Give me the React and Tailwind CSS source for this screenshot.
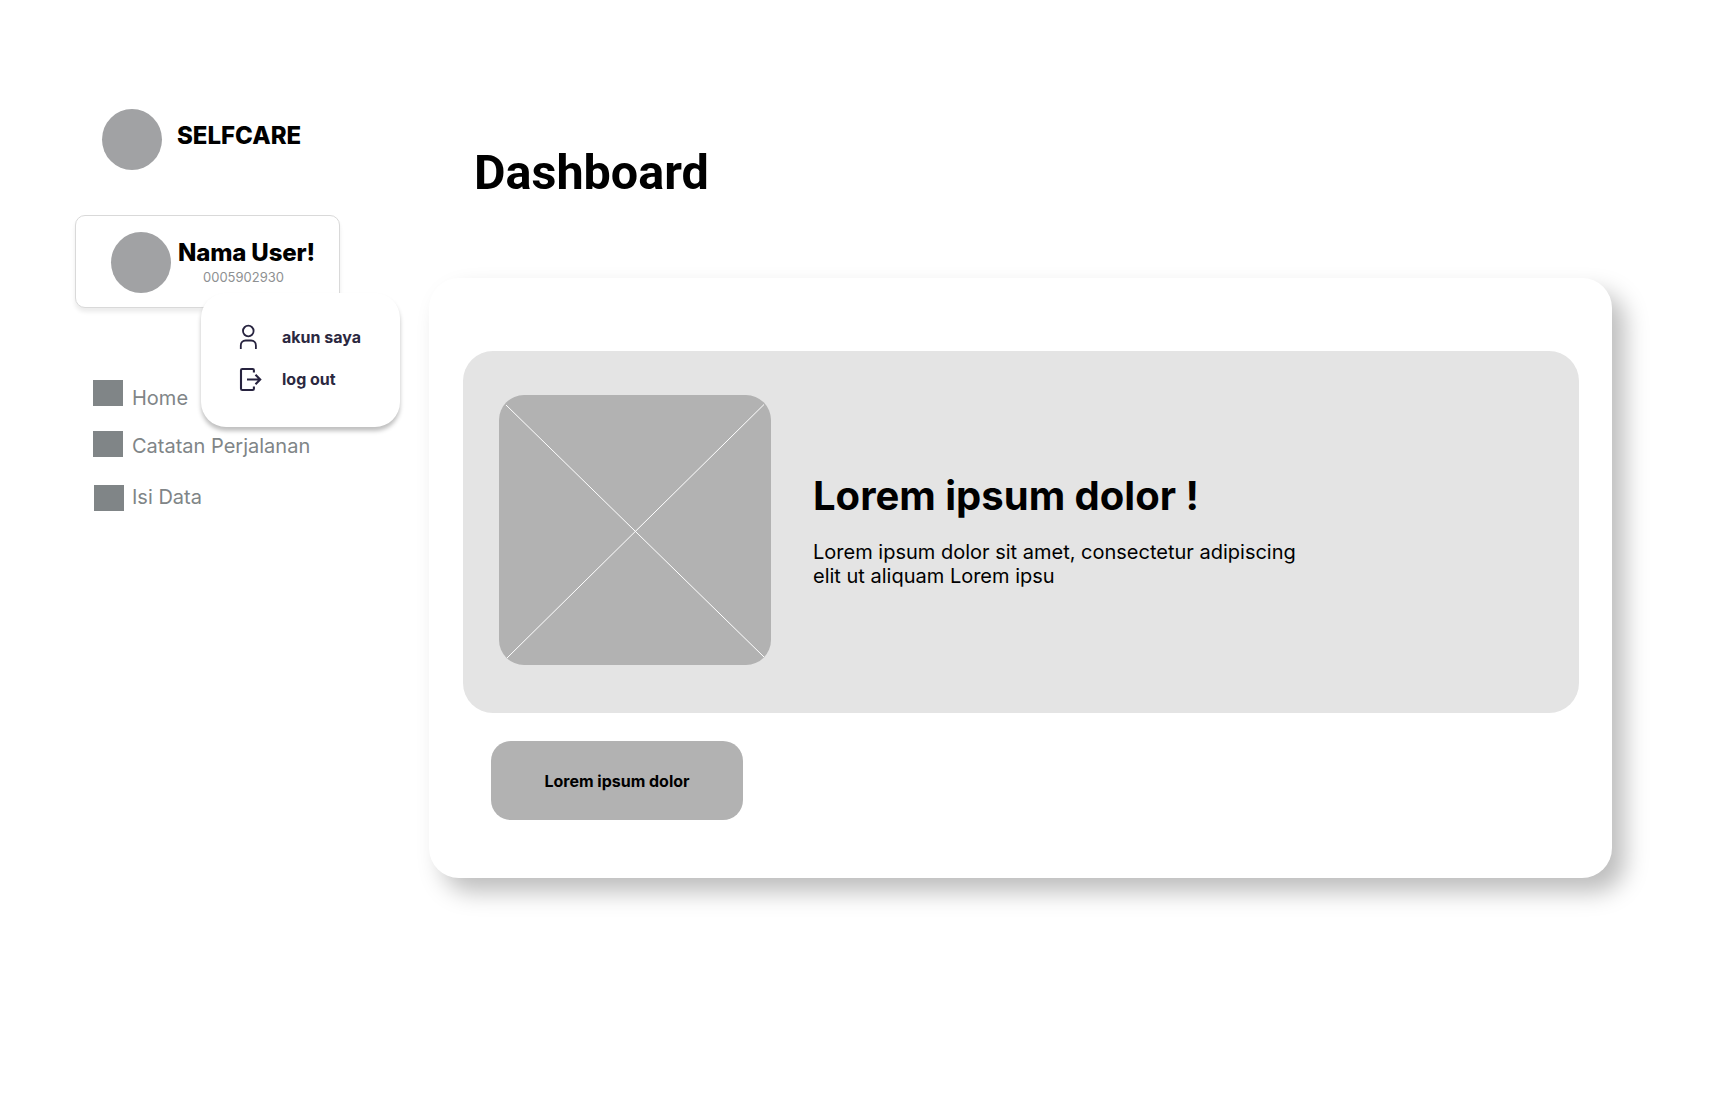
import React from "react";

const navItems = [
  { label: "Home", row: "h-[26px] ml-[93px]", text: "ml-[9px] mt-[6px]" },
  { label: "Catatan Perjalanan", row: "h-[26px] ml-[93px] mt-[25px]", text: "ml-[9px] mt-[3px]" },
  { label: "Isi Data", row: "h-[26px] ml-[94px] mt-[28px]", text: "ml-[8px]" },
];

function UserIcon() {
  return (
    <svg width="24" height="28" viewBox="0 0 24 28" fill="none" stroke="#27233f" strokeWidth="1.8">
      <circle cx="10.3" cy="8" r="5.3" />
      <path d="M2.8 26v-3.6c0-2.8 2-4.9 4.8-4.9h5.5c2.8 0 4.8 2.1 4.8 4.9V26" />
    </svg>
  );
}

function LogoutIcon() {
  return (
    <svg width="24" height="28" viewBox="0 0 24 28" fill="none" stroke="#27233f" strokeWidth="2.1">
      <path d="M15.9 7.5V5.3c0-.8-.5-1.3-1.3-1.3H4.3C3.5 4 3 4.500 3 5.300v18.400c0 .8.5 1.300 1.300 1.300h10.300c.8 0 1.300-.5 1.300-1.300V21.500" />
      <path d="M9 14.500h13M17.500 9.800l4.700 4.700-4.700 4.700" />
    </svg>
  );
}

function AccountMenu() {
  return (
    <div className="absolute left-[125px] top-[77px] z-10 h-[134px] w-[199px] rounded-[25px] bg-white pl-[37px] pt-[30px] text-base leading-5 font-bold text-[#2b2840] shadow-[0_4px_4px_rgba(0,0,0,0.25)]">
      <div className="flex h-[28px] items-start">
        <UserIcon />
        <span className="ml-5 mt-[4px]">akun saya</span>
      </div>
      <div className="mt-[14px] flex h-[28px] items-start">
        <LogoutIcon />
        <span className="ml-5 mt-[4px]">log out</span>
      </div>
    </div>
  );
}

function Sidebar() {
  return (
    <aside className="w-[429px] shrink-0 pt-[109px]">
      <div className="flex h-[61px] pl-[102px]">
        <div className="h-[61px] w-[60px] rounded-[50%] bg-[#a1a2a4]" />
        <span className="ml-[15px] mt-[12px] text-2xl leading-[29px] font-extrabold">SELFCARE</span>
      </div>

      <div className="relative ml-[75px] mt-[45px] flex h-[93px] w-[265px] rounded-[10px] border border-[#d9d9d9] bg-white pl-[35px] pt-[16px] shadow-[0_4px_4px_rgba(0,0,0,0.08)]">
        <div className="h-[61px] w-[60px] rounded-[50%] bg-[#a1a2a4]" />
        <div className="ml-[7px] mt-[6px] flex flex-col whitespace-nowrap">
          <span className="text-2xl leading-[29px] font-extrabold tracking-[-0.15px]">Nama User!</span>
          <span className="ml-[25px] mt-[2px] text-[13px] leading-4 text-[#8e9092]">0005902930</span>
        </div>
        <AccountMenu />
      </div>

      <nav className="mt-[72px] text-xl leading-6 text-[#808587]">
        {navItems.map((item) => (
          <div key={item.label} className={`flex items-start ${item.row}`}>
            <div className="h-[26px] w-[30px] bg-[#808587]" />
            <span className={`whitespace-nowrap ${item.text}`}>{item.label}</span>
          </div>
        ))}
      </nav>
    </aside>
  );
}

function ImagePlaceholder() {
  return (
    <div className="h-[270px] w-[272px] shrink-0 overflow-hidden rounded-[25px] bg-[#b2b2b2]">
      <svg width="272" height="270" viewBox="0 0 272 270" stroke="#fff" strokeWidth="1">
        <path d="M7 10L265 262M265 9.500L8 263" />
      </svg>
    </div>
  );
}

export default function App() {
  return (
    <div className="flex h-[1117px] w-[1728px] overflow-hidden bg-white font-['Inter',sans-serif] text-black">
      <Sidebar />
      <main className="w-[1183px] pt-[144px]">
        <h1 className="ml-[45px] h-[134px] font-['Roboto',sans-serif] text-[48.5px] leading-[57px] font-bold">Dashboard</h1>
        <section className="h-[600px] rounded-[30px] bg-white pl-[34px] pt-[73px] shadow-[13px_14px_23px_rgba(0,0,0,0.26)]">
          <div className="flex h-[362px] w-[1116px] rounded-[30px] bg-[#e4e4e4] pl-[36px] pt-[44px]">
            <ImagePlaceholder />
            <div className="ml-[42px] mt-[77px] w-[520px]">
              <h2 className="text-[40px] leading-[48px] font-bold">Lorem ipsum dolor !</h2>
              <p className="mt-[20px] text-xl leading-6">
                Lorem ipsum dolor sit amet, consectetur adipiscing
                <br />
                elit ut aliquam Lorem ipsu
              </p>
            </div>
          </div>
          <button className="ml-[28px] mt-[28px] flex h-[79px] w-[252px] items-center justify-center rounded-[20px] bg-[#b2b2b2] text-base font-bold">
            Lorem ipsum dolor
          </button>
        </section>
      </main>
    </div>
  );
}
